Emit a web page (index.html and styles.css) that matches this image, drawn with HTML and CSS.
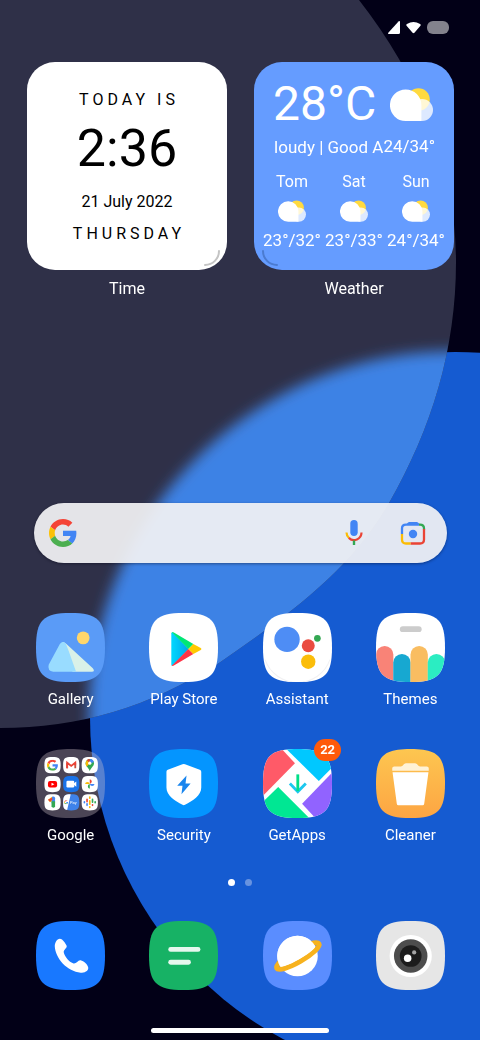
FILE: index.html
```html
<!DOCTYPE html>
<html lang="en">
<head>
<meta charset="utf-8">
<meta name="viewport" content="width=device-width, initial-scale=1">
<title>Home screen</title>
<link rel="stylesheet" href="styles.css">
</head>
<body>
<svg class="wallpaper" viewBox="0 0 480 1040" preserveAspectRatio="xMidYMid slice" aria-hidden="true">
  <defs>
    <clipPath id="veil"><path d="M-400 0H359C419 77 456 165 456 262C456 349 432 428 389 503C349 573 285 617 219 663C149 707 80 728 0 728H-400Z"/></clipPath>
    <filter id="soft" x="-10%" y="-10%" width="120%" height="120%"><feGaussianBlur stdDeviation="7"/></filter>
  </defs>
  <rect x="-800" width="2080" height="1040" fill="#020017"/>
  <circle cx="455" cy="717" r="365" fill="#155bd1"/>
  <g clip-path="url(#veil)">
    <rect x="-400" width="900" height="740" fill="#2f3048"/>
    <circle cx="455" cy="717" r="366" fill="#3d82e5" filter="url(#soft)"/>
  </g>
</svg>

<svg class="defs" width="0" height="0" aria-hidden="true">
  <defs>
    <path id="tile" d="M0 34C0 7 7 0 34 0S68 7 68 34 61 68 34 68 0 61 0 34Z"/>
    <clipPath id="tile-clip"><use href="#tile"/></clipPath>
    <path id="mini" d="M0 8C0 1.500 1.500 0 8 0S16 1.500 16 8 14.500 16 8 16 0 14.500 0 8Z"/>
    <linearGradient id="play-blue" x1="0" x2="1"><stop stop-color="#00d8ff"/><stop offset="1" stop-color="#00a6e8"/></linearGradient>
    <linearGradient id="clean" x1="0" y1="0" x2="0" y2="1"><stop stop-color="#fdc650"/><stop offset="1" stop-color="#fda543"/></linearGradient>
    <symbol id="g" viewBox="0 0 48 48">
      <path fill="#f44336" d="M24 9.500c3.540 0 6.710 1.220 9.210 3.600l6.850-6.850C35.900 2.380 30.470 0 24 0 14.620 0 6.510 5.380 2.560 13.220l7.980 6.190C12.430 13.720 17.740 9.500 24 9.500z"/>
      <path fill="#4285f4" d="M46.980 24.550c0-1.570-.15-3.090-.38-4.550H24v9.020h12.940c-.58 2.960-2.260 5.480-4.780 7.180l7.730 6c4.510-4.180 7.090-10.360 7.090-17.650z"/>
      <path fill="#fbc107" d="M10.530 28.590c-.48-1.450-.76-2.990-.76-4.590s.27-3.140.76-4.590l-7.980-6.190C.92 16.460 0 20.120 0 24c0 3.880.92 7.540 2.560 10.780l7.970-6.190z"/>
      <path fill="#4caf50" d="M24 48c6.480 0 11.930-2.130 15.890-5.810l-7.730-6c-2.150 1.450-4.920 2.300-8.160 2.300-6.260 0-11.570-4.220-13.470-9.910l-7.980 6.190C6.510 42.620 14.620 48 24 48z"/>
    </symbol>
    <symbol id="cloud" viewBox="0 0 43 33">
      <circle cx="28.500" cy="11.500" r="11.300" fill="#ffda3f"/>
      <circle cx="32" cy="22" r="11" fill="#fff" fill-opacity=".78"/>
      <path fill="#fff" d="M15.700 1.500A15.700 15.700 0 0 1 31.400 17.200V33H15.700A15.700 15.700 0 0 1 15.700 1.500Z"/>
    </symbol>
  </defs>
</svg>

<div class="screen">
  <header class="status">
    <svg width="12" height="13" viewBox="0 0 12 13" role="img" aria-label="Signal"><path fill="#fff" d="M10.500.4Q12-.6 12 1V11.500Q12 13 10.500 13H1Q-.6 13 .5 11.500Z"/></svg>
    <svg width="15" height="13" viewBox="0 0 16 13" role="img" aria-label="Wi-Fi"><path fill="#fff" d="M.6 4.600Q-.2 3.700 1 2.800 8-1.800 15 2.800 16.200 3.700 15.400 4.600L9 12Q8 13 7 12Z"/></svg>
    <span class="battery" role="img" aria-label="Battery"></span>
  </header>

  <section class="widgets">
    <article class="widget">
      <div class="card clock">
        <p class="tracked">TODAY IS</p>
        <p class="time">2:36</p>
        <p class="date">21 July 2022</p>
        <p class="tracked">THURSDAY</p>
        <svg class="grip grip-right" viewBox="0 0 16 16" aria-hidden="true"><path d="M15 1A14 14 0 0 1 1 15"/></svg>
      </div>
      <h2 class="label">Time</h2>
    </article>
    <article class="widget">
      <div class="card weather">
        <div class="now"><span class="degrees">28°C</span><svg class="now-icon" aria-hidden="true"><use href="#cloud"/></svg></div>
        <div class="summary"><span class="ticker"><span>Cloudy | Good A</span></span><span class="range">24/34°</span></div>
        <ul class="days">
          <li><span>Tom</span><svg aria-hidden="true"><use href="#cloud"/></svg><span class="range">23°/32°</span></li>
          <li><span>Sat</span><svg aria-hidden="true"><use href="#cloud"/></svg><span class="range">23°/33°</span></li>
          <li><span>Sun</span><svg aria-hidden="true"><use href="#cloud"/></svg><span class="range">24°/34°</span></li>
        </ul>
        <svg class="grip grip-left" viewBox="0 0 16 16" aria-hidden="true"><path d="M1 1A14 14 0 0 0 15 15"/></svg>
      </div>
      <h2 class="label">Weather</h2>
    </article>
  </section>

  <form class="search" role="search">
    <svg width="28" height="28" aria-hidden="true"><use href="#g"/></svg>
    <input type="text" aria-label="Search">
    <button type="button" aria-label="Voice search">
      <svg width="18" height="26" viewBox="0 0 18 26" fill="none" stroke-width="2.200">
        <rect x="5.300" y="0" width="7.400" height="16" rx="3.700" fill="#4285f4"/>
        <path stroke="#fbbc05" d="M1.500 12.500A7.500 7.500 0 0 0 4 18"/>
        <path stroke="#ea4335" d="M3.800 17.900A7.500 7.500 0 0 0 16.500 12.500"/>
        <path stroke="#34a853" stroke-width="2.400" d="M9 20.500V25"/>
      </svg>
    </button>
    <button type="button" aria-label="Search by image">
      <svg width="26" height="24" viewBox="0 0 26 24" fill="none" stroke-width="2.300">
        <path fill="#4285f4" d="M6 4Q8 1 9 1H17Q18 1 20 4Z"/>
        <path stroke="#4285f4" d="M2 13V7.500Q2 3.700 6 3.700H19"/>
        <path stroke="#34a853" d="M19 3.700H20Q24 3.700 24 7.500V8.500"/>
        <path stroke="#ea4335" d="M24 8V18.500Q24 22.500 20 22.500H10.500"/>
        <path stroke="#fbbc05" d="M10.500 22.500H6Q2 22.500 2 18.500V13"/>
        <circle cx="13" cy="13" r="4.200" fill="#4285f4"/>
      </svg>
    </button>
  </form>

  <nav class="apps" aria-label="Apps">
    <a class="app" href="#gallery">
      <svg viewBox="0 0 68 68" aria-hidden="true"><use href="#tile" fill="#5a9bf7"/>
        <circle cx="46.500" cy="24.500" r="6.300" fill="#ffd66b"/>
        <path fill="#d9f1e8" d="M26 28.500Q28 28.500 30 30.500L56 54.500Q58.500 58 55 58H36Z"/>
        <path fill="#99dcff" d="M23.500 30.500Q26.500 26.500 29.500 30.500C33 39 36 48 39.500 58H17Q11 57 12.500 51Z"/></svg>
      <span class="label">Gallery</span>
    </a>
    <a class="app" href="#play">
      <svg viewBox="0 0 68 68" aria-hidden="true"><use href="#tile" fill="#fff"/>
        <path fill="url(#play-blue)" d="M22 20Q22 18.500 23.500 19.500L39 35.500 23.500 51.500Q22 52.500 22 51Z"/>
        <path fill="#00e676" d="M22.500 19Q23.500 18.500 24.500 19.200L43.700 30.500 38.800 35.500Z"/>
        <path fill="#ff3346" d="M22.500 52Q23.500 52.500 24.500 51.800L43.700 40.500 38.800 35.500Z"/>
        <path fill="#ffc900" d="M43.700 30.500 51 34.500Q52.500 35.500 51 36.500L43.700 40.500 38.800 35.500Z"/></svg>
      <span class="label">Play Store</span>
    </a>
    <a class="app" href="#assistant">
      <svg viewBox="0 0 68 68" aria-hidden="true"><use href="#tile" fill="#fff"/>
        <path d="M2 46A34 34 0 0 0 66 46" fill="none" stroke="#f1f1f3"/>
        <circle cx="23.700" cy="26" r="12.500" fill="#4e8df5"/><circle cx="44.600" cy="32.300" r="6.400" fill="#ea4c40"/>
        <circle cx="53.600" cy="25" r="3.300" fill="#34a853"/><circle cx="44.600" cy="48" r="7.100" fill="#fbbd0a"/></svg>
      <span class="label">Assistant</span>
    </a>
    <a class="app" href="#themes">
      <svg viewBox="0 0 68 68" aria-hidden="true"><use href="#tile" fill="#fff"/>
        <g clip-path="url(#tile-clip)">
          <rect x="23.500" y="13" width="21.500" height="5.800" rx="2.900" fill="#ccc"/>
          <rect y="32.500" width="17.100" height="50" rx="8.500" fill="#f98377"/><rect x="17" y="40.300" width="17.100" height="50" rx="8.500" fill="#17a8d1"/>
          <rect x="34" y="32.500" width="17.100" height="50" rx="8.500" fill="#f9bd61"/><rect x="51" y="40.300" width="17.100" height="50" rx="8.500" fill="#2bedc2"/>
        </g></svg>
      <span class="label">Themes</span>
    </a>
    <a class="app" href="#google">
      <svg viewBox="0 0 68 68" aria-hidden="true"><use href="#tile" fill="#d8c9d0" fill-opacity=".34"/>
        <g transform="translate(8.300 8)"><use href="#mini" fill="#fff"/><use href="#g" x="2.500" y="2.500" width="11" height="11"/></g>
        <g transform="translate(26.700 8)"><use href="#mini" fill="#fff"/><g fill="none" stroke-width="1.800"><path stroke="#c5523f" d="M4 5.500V11M12 5.500V11"/><path stroke="#ea4335" d="M4 11V5.500L8 8.700 12 5.500V8"/></g></g>
        <g transform="translate(45 8)"><use href="#mini" fill="#fff"/><path fill="#34a853" d="M8 14C7.500 11 3.800 9 3.800 6A4.200 4.200 0 0 1 12.200 6C12.200 9 8.500 11 8 14Z"/><path fill="#4285f4" d="M8 6V1.800A4.200 4.200 0 0 1 12 5Z"/><path fill="#ea4335" d="M8 6 5 3Q6.300 1.800 8 1.800Z"/><path fill="#fbbc05" d="M8 6 4.800 9.500Q3 6 5 3Z"/><circle cx="8" cy="6" r="1.600" fill="#fff"/></g>
        <g transform="translate(8.300 26.500)"><use href="#mini" fill="#fff"/><rect x="3.500" y="5" width="9" height="6.500" rx="2" fill="#f00"/><path fill="#fff" d="M7 6.800 9.800 8.200 7 9.700Z"/></g>
        <g transform="translate(26.700 26.500)"><use href="#mini" fill="#1a73e8"/><rect x="3.300" y="4.800" width="7.700" height="6.600" rx="1.200" fill="#fff"/><path fill="#fff" d="M10.500 7.500 13 5.500V10.700L10.500 8.800Z"/></g>
        <g transform="translate(45 26.500)"><use href="#mini" fill="#fff"/><path fill="#ea4335" d="M8 3.300A2.400 2.400 0 0 1 8 8Z"/><path fill="#4285f4" d="M12.700 8A2.400 2.400 0 0 1 8 8Z"/><path fill="#34a853" d="M8 12.700A2.400 2.400 0 0 1 8 8Z"/><path fill="#fbbc05" d="M3.300 8A2.400 2.400 0 0 1 8 8Z"/></g>
        <g transform="translate(8.300 44.500)"><use href="#mini" fill="#fff"/><path fill="#fbbc05" d="M3.500 5.500 7.500 2.500V7L5.500 8Z"/><path fill="#4285f4" d="M7.500 2.500Q10.500 1.500 10.500 4V9H7Z"/><path fill="#ea4335" d="M3.500 5.500 7.500 3.500 8 5 5.500 7.500Z"/><path fill="#34a853" d="M7 7H10.500V12Q9 15 7 12Z"/></g>
        <g transform="translate(26.700 44.500)"><use href="#mini" fill="#3e82ea"/><path fill="#fff" d="M7.500 0C1.500 0 0 1.500 0 8S1.200 15 4 15.700Z"/><use href="#g" x="1" y="6" width="4" height="4"/><text x="6.800" y="9.800" class="mini-text">Pay</text></g>
        <g transform="translate(45 44.500)"><use href="#mini" fill="#fff"/><g fill="none" stroke-width="1.600" stroke-linecap="round"><path stroke="#4285f4" d="M2.700 7.500V8.500M5.300 9.500V11"/><path stroke="#ea4335" d="M5.300 5V7.500M10.700 10.500V11"/><path stroke="#fbbc05" d="M8 2.800V4M8 6.500V10M8 12.500V13.200"/><path stroke="#34a853" d="M10.700 5V8M13.300 7.500V8.500"/></g></g>
      </svg>
      <span class="label">Google</span>
    </a>
    <a class="app" href="#security">
      <svg viewBox="0 0 68 68" aria-hidden="true"><use href="#tile" fill="#0495ff"/>
        <path fill="#fff" d="M33 15Q34.200 14.400 35.500 15L50 20.500Q51.500 21 51.500 22.500V38C51.500 46 43 51 35.500 55Q34.200 55.700 33 55C25.500 51 17.200 46 17.200 38V22.500Q17.200 21 18.500 20.500Z"/>
        <path fill="#1a86ee" d="M37 26 27.800 36.200H33L32 44.500 41 34H36Z"/></svg>
      <span class="label">Security</span>
    </a>
    <a class="app" href="#getapps">
      <span class="badge">22</span>
      <svg viewBox="0 0 68 68" aria-hidden="true"><use href="#tile" fill="#fff"/>
        <g clip-path="url(#tile-clip)">
          <path fill="#ff5a68" d="M0 0H18.500L31.500 14 0 46Z"/><path fill="#00c8ff" d="M23 0H68V18.500L55 31.500Z"/>
          <path fill="#9163ff" d="M68 23.500V68H51.500L38.500 54Z"/><path fill="#00e793" d="M0 52 15 37.500 45.500 68H0Z"/>
        </g>
        <path fill="none" stroke="#1cc8ef" stroke-width="2.800" d="M26.500 34 34.300 42 42.200 34"/><path stroke="#00df88" stroke-width="2.800" d="M34.300 25V41.500"/></svg>
      <span class="label">GetApps</span>
    </a>
    <a class="app" href="#cleaner">
      <svg viewBox="0 0 68 68" aria-hidden="true"><use href="#tile" fill="url(#clean)"/>
        <path fill="#fff2d6" d="M16 21.500V19Q16 17.200 18 17.200H24.500Q26 17 27 15.500 28 14 29.500 14H38.500Q40 14 41 15.500 42 17 43.500 17.200H50Q52 17.200 52 19V21.500Z"/>
        <path fill="#fff" d="M16.300 23H51.700L47.500 54Q47.300 55.500 46 55.500H22Q20.700 55.500 20.500 54Z"/></svg>
      <span class="label">Cleaner</span>
    </a>
  </nav>

  <div class="pages" role="img" aria-label="Page 1 of 2"><span class="page current"></span><span class="page"></span></div>

  <nav class="apps dock" aria-label="Dock">
    <a class="app" href="#phone" aria-label="Phone">
      <svg viewBox="0 0 68 68" aria-hidden="true"><use href="#tile" fill="#1878ff"/>
        <path fill="#fff" d="M23.500 17.500C26.500 17.700 29 22 30.200 24.500 31 27 26.500 28.500 27.500 31.500 29 36 32.500 40 36.500 41.700 39.500 43 41.500 38 44 38.800 47 39.500 51 43 51.500 46 51.700 49.500 47.500 51 44 51 31 50 19 37 18.500 25 18.500 21.500 20.500 17.500 23.500 17.500Z"/></svg>
    </a>
    <a class="app" href="#messages" aria-label="Messages">
      <svg viewBox="0 0 68 68" aria-hidden="true"><use href="#tile" fill="#17b265"/>
        <rect x="19" y="25.700" width="31.700" height="4.700" rx="2.300" fill="#e6f7ee"/><rect x="19" y="38.300" width="22.300" height="4.700" rx="2.300" fill="#e6f7ee"/></svg>
    </a>
    <a class="app" href="#browser" aria-label="Browser">
      <svg viewBox="0 0 68 68" aria-hidden="true"><use href="#tile" fill="#5a8dff"/>
        <circle cx="34" cy="34.500" r="20" fill="#fff"/>
        <g transform="rotate(-30 34.300 34.500)"><ellipse cx="34.300" cy="34.500" rx="24" ry="5.800" fill="none" stroke="#f7b21e" stroke-width="5"/><path fill="#fff" d="M14 34.500A20 20 0 0 1 54 34.500C54 39 15 39 14 34.500Z"/></g></svg>
    </a>
    <a class="app" href="#camera" aria-label="Camera">
      <svg viewBox="0 0 68 68" aria-hidden="true"><use href="#tile" fill="#e6e6e6"/>
        <circle cx="34.200" cy="34.500" r="20.800" fill="#fff"/><circle cx="34.200" cy="34.500" r="16.500" fill="#4d4d4d"/><circle cx="34.200" cy="34.500" r="10.700" fill="#1c1c1c"/>
        <circle cx="31.200" cy="36.800" r="3.700" fill="#fff"/><circle cx="37.600" cy="31" r="2.100" fill="#a5a5a5"/></svg>
    </a>
  </nav>
  <div class="home-bar"></div>
</div>
</body>
</html>
```
FILE: styles.css
```css
* {
  box-sizing: border-box;
}

body {
  margin: 0;
  background: #020017;
  color: #fff;
  font-family: Roboto, "Noto Sans", sans-serif;
  font-size: 16px;
  line-height: 20px;
}

p,
h2,
ul {
  margin: 0;
  padding: 0;
}

svg {
  display: block;
}

.wallpaper {
  position: fixed;
  inset: 0;
  width: 100%;
  height: 100%;
}

.defs {
  position: absolute;
}

.screen {
  position: relative;
  display: flex;
  flex-direction: column;
  min-height: 100vh;
}

.status {
  display: flex;
  justify-content: flex-end;
  align-items: center;
  gap: 6px;
  padding: 21px 31px 28px;
}

.battery {
  width: 22px;
  height: 13px;
  border-radius: 6px;
  background: #83828d;
}

.widgets {
  display: grid;
  grid-template-columns: repeat(2, minmax(0, 1fr));
  gap: 27px;
  padding: 0 26px 0 27px;
  margin-bottom: auto;
}

.card {
  position: relative;
  height: 208px;
  border-radius: 28px;
}

.label {
  display: block;
  font-size: 15px;
  font-weight: 400;
  line-height: 20px;
  text-align: center;
  white-space: nowrap;
}

.widget .label {
  margin-top: 9px;
  font-size: 16px;
}

.clock {
  padding-top: 28px;
  background: #fff;
  color: #000;
  text-align: center;
}

.tracked {
  padding-left: 4px;
  letter-spacing: 4px;
}

.time {
  margin: 10px 0 14px;
  font-size: 52px;
  line-height: 58px;
}

.date {
  margin-bottom: 12px;
}

.grip {
  position: absolute;
  bottom: 4px;
  width: 16px;
  height: 16px;
  fill: none;
  stroke-width: 2;
  stroke-linecap: round;
}

.grip-right {
  right: 7px;
  stroke: #c4c4c4;
}

.grip-left {
  left: 8px;
  stroke: #4b7bd0;
}

.weather {
  padding: 14px 7px 0;
  background: #659cff;
}

.now {
  display: flex;
  justify-content: space-between;
  align-items: center;
  padding: 0 14px 0 12px;
}

.degrees {
  font-size: 48px;
  line-height: 56px;
  font-weight: 400;
}

.now-icon {
  width: 43px;
  height: 33px;
}

.summary {
  display: flex;
  margin-top: 4px;
  padding: 0 12px 0 13px;
}

.ticker {
  display: flex;
  flex: 1;
  justify-content: flex-end;
  overflow: hidden;
  padding-top: 1px;
  font-size: 17px;
  white-space: nowrap;
}

.range {
  font-size: 17px;
}

.days {
  display: grid;
  grid-template-columns: repeat(3, minmax(0, 1fr));
  margin-top: 15px;
  list-style: none;
}

.days li {
  display: flex;
  flex-direction: column;
  align-items: center;
}

.days svg {
  width: 28px;
  height: 22px;
  margin: 8px 0;
}

.search {
  display: flex;
  align-items: center;
  height: 60px;
  margin: 0 33px 50px 34px;
  padding: 0 21px 0 15px;
  border-radius: 30px;
  background: rgba(242, 242, 244, 0.93);
  box-shadow: 0 1px 3px rgba(0, 0, 20, 0.4);
}

.search input {
  flex: 1;
  min-width: 0;
  border: 0;
  outline: 0;
  background: none;
  font: inherit;
}

.search button {
  padding: 0;
  border: 0;
  background: none;
}

.search button + button {
  margin-left: 37px;
}

.apps {
  display: grid;
  grid-template-columns: repeat(4, minmax(0, 1fr));
  row-gap: 40px;
  padding: 0 13px 0 14px;
}

.app {
  position: relative;
  display: flex;
  flex-direction: column;
  align-items: center;
  gap: 7px;
  color: inherit;
  text-decoration: none;
}

.app > svg {
  width: 69px;
  height: 69px;
}

.badge {
  position: absolute;
  top: -10px;
  left: 50%;
  margin-left: 17px;
  padding: 0 6px;
  border-radius: 11px;
  background: #ff5a0a;
  font-size: 13px;
  font-weight: 700;
  line-height: 22px;
}

.mini-text {
  fill: #fff;
  font-size: 4px;
}

.pages {
  display: flex;
  justify-content: center;
  gap: 10px;
  margin: 34px 0 35px;
}

.page {
  width: 7px;
  height: 7px;
  border-radius: 50%;
  background: #6893e0;
}

.page.current {
  background: #fff;
}

.home-bar {
  width: 37%;
  height: 5px;
  margin: 38px auto 7px;
  border-radius: 3px;
  background: #fff;
}
```
